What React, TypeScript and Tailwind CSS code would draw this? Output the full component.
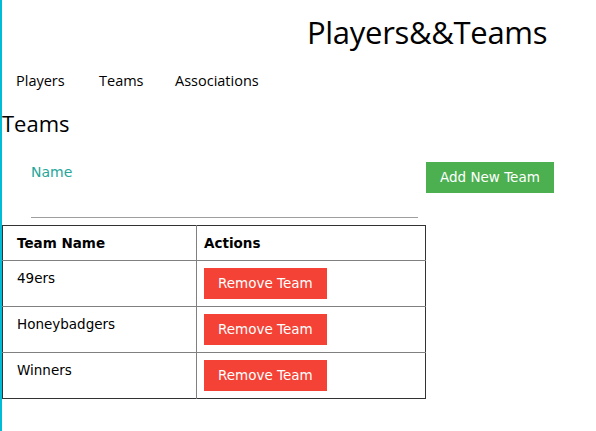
import React from "react";

const teams = ["49ers", "Honeybadgers", "Winners"];

function Header() {
  return (
    <>
      <div className="h-[62px] pl-[305px] pt-[12px]">
        <h1 className="text-[31px] leading-[40px] text-black font-['Open_Sans',sans-serif] tracking-[-0.3px]">
          Players&amp;&amp;Teams
        </h1>
      </div>
      <nav className="flex h-[38px] items-center font-['Open_Sans',sans-serif] text-[14.5px] text-black">
        <a className="ml-[14px] w-[83px]">Players</a>
        <a className="w-[76px]">Teams</a>
        <a>Associations</a>
      </nav>
    </>
  );
}

function AddTeamForm() {
  return (
    <div className="flex items-start pl-[29px] pt-[19px]">
      <div className="w-[387px] h-[62px] border-b border-[#9e9e9e] relative">
        <label className="absolute left-0 top-[6px] text-[14px] text-[#26a69a] font-['DejaVu_Sans',sans-serif]">
          Name
        </label>
        <input className="w-full h-full outline-none bg-transparent" />
      </div>
      <button className="ml-[8px] mt-[6px] h-[31px] px-[14px] bg-[#4caf50] text-white text-[13.5px] font-['DejaVu_Sans',sans-serif]">
        Add New Team
      </button>
    </div>
  );
}

function TeamsTable() {
  return (
    <table className="mt-[7px] border border-[#333] border-collapse text-[13.5px] font-['DejaVu_Sans',sans-serif] text-black">
      <thead>
        <tr className="h-[35px]">
          <th className="w-[194px] text-left font-bold px-[14px] border-r border-b border-[#808080]">
            Team Name
          </th>
          <th className="w-[229px] text-left font-bold px-[7px] border-b border-[#808080]">
            Actions
          </th>
        </tr>
      </thead>
      <tbody>
        {teams.map((team, i) => (
          <tr key={team} className={i < teams.length - 1 ? "border-b border-[#808080]" : ""}>
            <td className="align-top px-[14px] pt-[7px] border-r border-[#808080]">{team}</td>
            <td className="align-top px-[7px] pt-[7px] pb-[7px]">
              <button className="h-[31px] px-[14px] bg-[#f44336] text-white text-[13.5px]">
                Remove Team
              </button>
            </td>
          </tr>
        ))}
      </tbody>
    </table>
  );
}

export default function App() {
  return (
    <div className="min-h-screen bg-white border-l-2 border-[#00bcd4]">
      <Header />
      <h2 className="pl-[0px] text-[22px] leading-[28px] font-['Open_Sans',sans-serif] text-black mt-[9px]">
        Teams
      </h2>
      <AddTeamForm />
      <TeamsTable />
    </div>
  );
}
